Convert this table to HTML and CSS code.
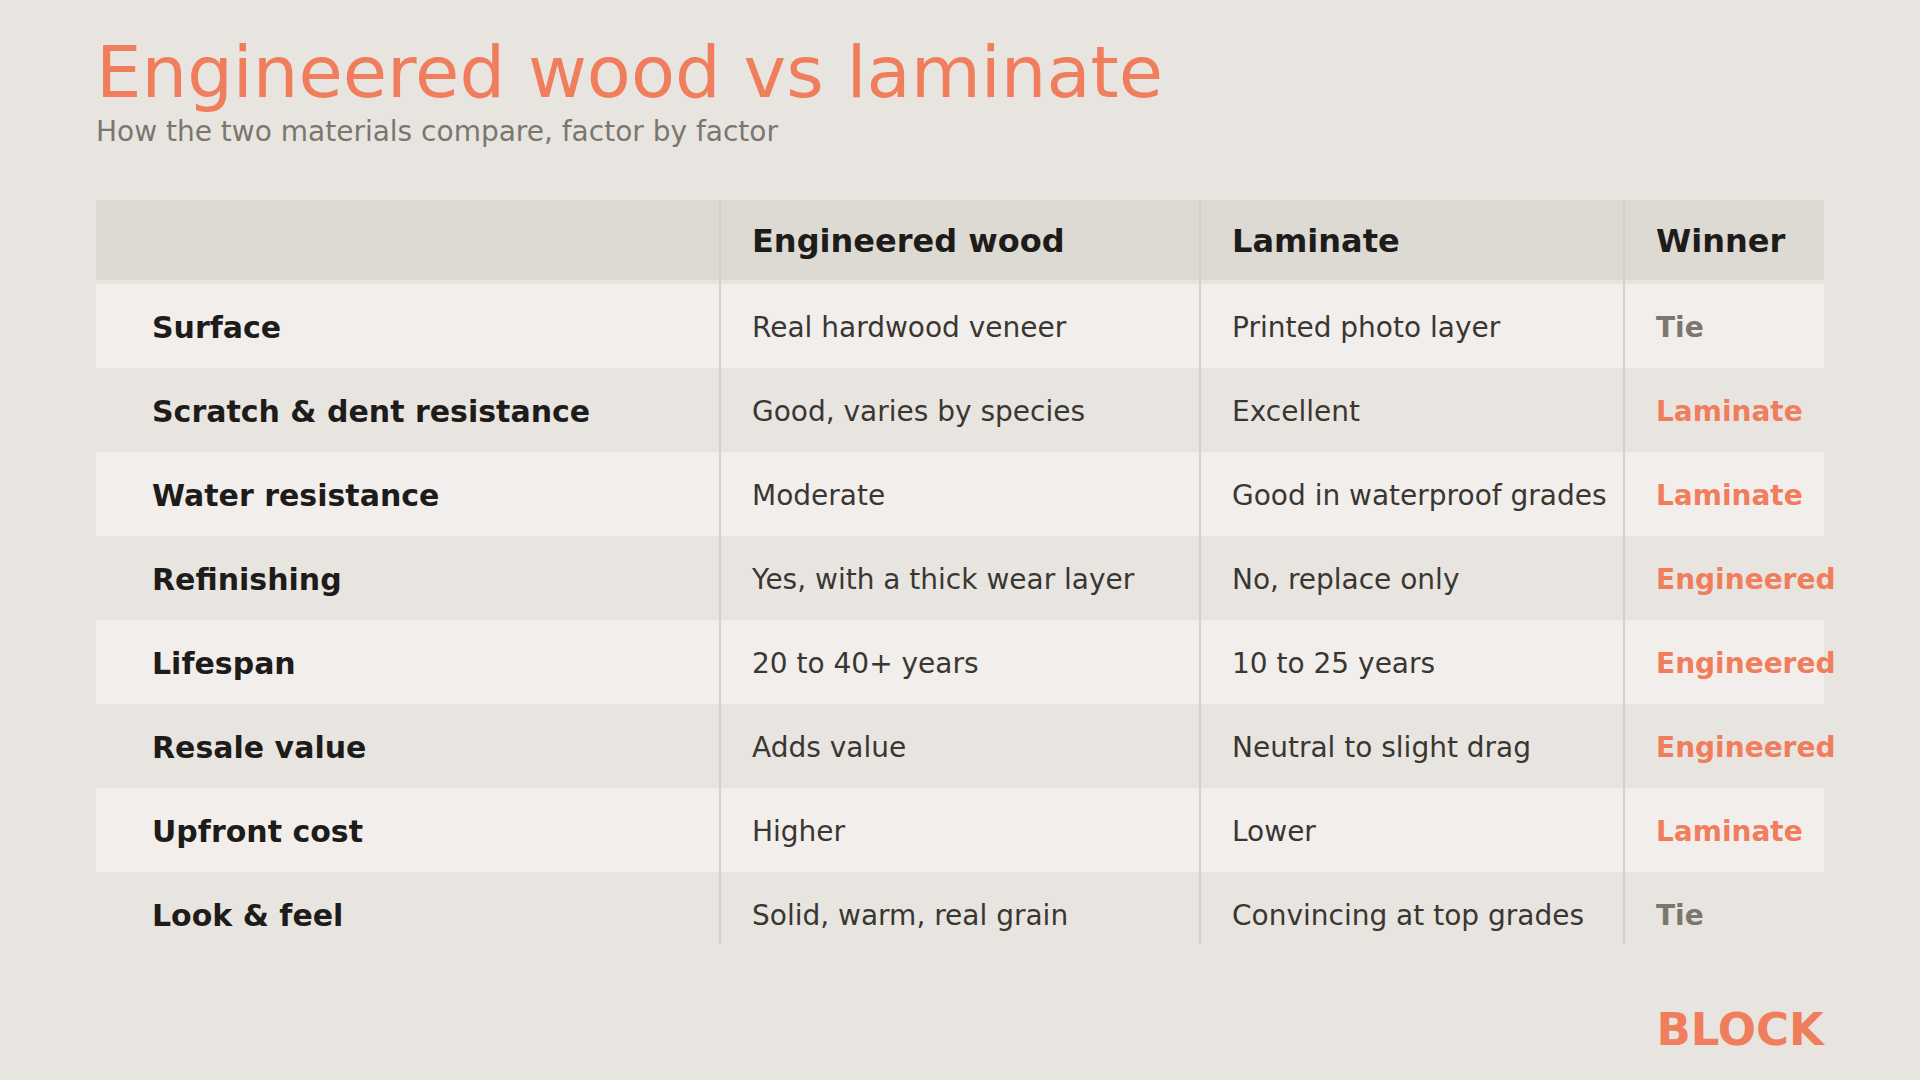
FILE: index.html
```html
<!DOCTYPE html>
<html>
<head>
<meta charset="utf-8">
<link rel="stylesheet" href="styles.css">
</head>
<body>
<div class="page">
  <header class="head">
    <h1 class="title">Engineered wood vs laminate</h1>
    <p class="subtitle">How the two materials compare, factor by factor</p>
  </header>
  <div class="table">
    <div class="row hdr">
      <div class="cell first"></div>
      <div class="cell">Engineered wood</div>
      <div class="cell">Laminate</div>
      <div class="cell">Winner</div>
    </div>
    <div class="row odd">
      <div class="cell first label">Surface</div>
      <div class="cell">Real hardwood veneer</div>
      <div class="cell">Printed photo layer</div>
      <div class="cell win tie">Tie</div>
    </div>
    <div class="row">
      <div class="cell first label">Scratch &amp; dent resistance</div>
      <div class="cell">Good, varies by species</div>
      <div class="cell">Excellent</div>
      <div class="cell win">Laminate</div>
    </div>
    <div class="row odd">
      <div class="cell first label">Water resistance</div>
      <div class="cell">Moderate</div>
      <div class="cell">Good in waterproof grades</div>
      <div class="cell win">Laminate</div>
    </div>
    <div class="row">
      <div class="cell first label">Refinishing</div>
      <div class="cell">Yes, with a thick wear layer</div>
      <div class="cell">No, replace only</div>
      <div class="cell win">Engineered</div>
    </div>
    <div class="row odd">
      <div class="cell first label">Lifespan</div>
      <div class="cell">20 to 40+ years</div>
      <div class="cell">10 to 25 years</div>
      <div class="cell win">Engineered</div>
    </div>
    <div class="row">
      <div class="cell first label">Resale value</div>
      <div class="cell">Adds value</div>
      <div class="cell">Neutral to slight drag</div>
      <div class="cell win">Engineered</div>
    </div>
    <div class="row odd">
      <div class="cell first label">Upfront cost</div>
      <div class="cell">Higher</div>
      <div class="cell">Lower</div>
      <div class="cell win">Laminate</div>
    </div>
    <div class="row last">
      <div class="cell first label">Look &amp; feel</div>
      <div class="cell">Solid, warm, real grain</div>
      <div class="cell">Convincing at top grades</div>
      <div class="cell win tie">Tie</div>
    </div>
  </div>
  <footer class="foot">
    <span class="brand">BLOCK</span>
  </footer>
</div>
</body>
</html>
```

FILE: styles.css
```css
html, body {
  margin: 0;
  padding: 0;
  background: #e8e5e0;
}
body {
  font-family: "DejaVu Sans", "Liberation Sans", sans-serif;
  width: 1920px;
  height: 1080px;
  overflow: hidden;
}
.page {
  padding: 32px 96px 0 96px;
  display: flex;
  flex-direction: column;
}
.title {
  margin: 0;
  font-size: 72px;
  line-height: 80px;
  font-weight: normal;
  color: #f07d5c;
}
.subtitle {
  margin: 2px 0 0 0;
  font-size: 28px;
  line-height: 36px;
  color: #7a776f;
}
.table {
  margin-top: 50px;
  width: 1728px;
  display: flex;
  flex-direction: column;
}
.row {
  display: grid;
  grid-template-columns: 623px 480px 424px 201px;
  height: 84px;
  align-items: stretch;
}
.row.odd {
  background: #f2eeeb;
}
.cell {
  display: flex;
  align-items: center;
  white-space: nowrap;
  border-left: 2px solid #d5d0ca;
  padding-left: 31px;
  padding-top: 2px;
  font-size: 28px;
  color: #3a3733;
}
.cell.first {
  border-left: none;
  padding-left: 56px;
}
.label {
  font-weight: bold;
  font-size: 30px;
  color: #1e1c1a;
}
.hdr .cell {
  font-weight: bold;
  font-size: 32px;
  color: #1e1c1a;
  padding-top: 2px;
  padding-bottom: 4px;
  background: linear-gradient(#ddd9d3, #ddd9d3) no-repeat;
  background-size: 100% 80px;
  background-clip: padding-box;
  background-origin: padding-box;
}
.win {
  font-weight: bold;
  color: #f07d5c;
}
.win.tie {
  color: #7a776f;
}
.row.last {
  height: 72px;
}
.row.last .cell {
  align-items: flex-start;
  padding-top: 26px;
  line-height: 36px;
}
.foot {
  width: 1728px;
  display: flex;
  justify-content: flex-end;
  margin-top: 60px;
}
.brand {
  font-weight: bold;
  font-size: 45px;
  line-height: 52px;
  color: #f07d5c;
}
```
